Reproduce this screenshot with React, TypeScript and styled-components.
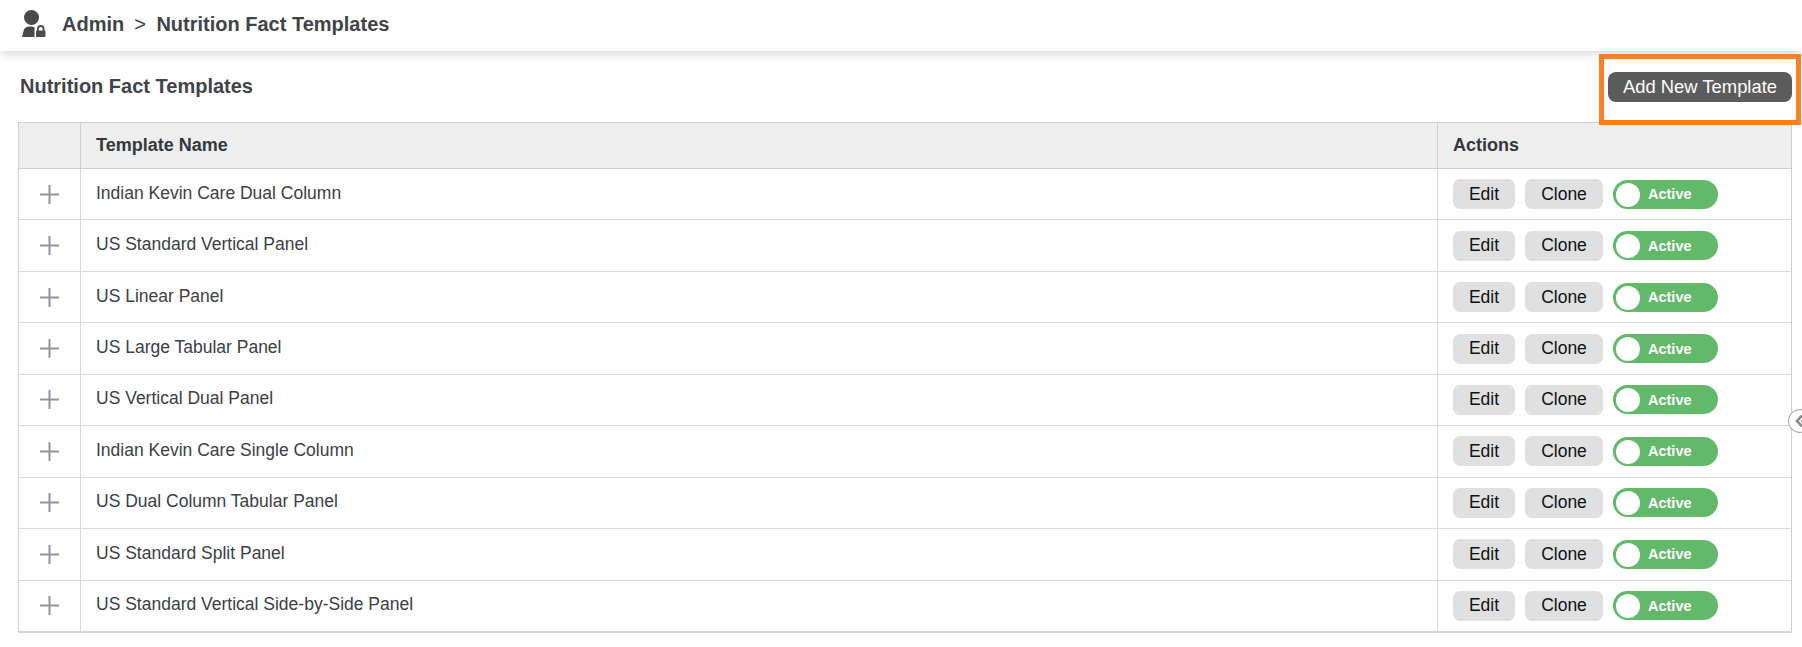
import React from "react";
import styled, { createGlobalStyle } from "styled-components";

const Global = createGlobalStyle`
  * { box-sizing: border-box; }
  html, body { margin: 0; padding: 0; background: #fff; overflow: hidden; }
  body { font-family: "Liberation Sans", Arial, sans-serif; color: #3b4045; }
`;

const Page = styled.div`
  position: relative;
  width: 1802px;
  height: 647px;
  overflow: hidden;
`;

const TopBar = styled.header`
  height: 51px;
  display: flex;
  align-items: center;
  padding: 0 0 3px 22px;
  background: #fff;
  box-shadow: 0 2px 10px rgba(0, 0, 0, 0.18);
  font-size: 20px;
  font-weight: 700;
  color: #3f4448;
`;

const UserIcon = styled.svg`
  width: 24px;
  height: 28px;
  margin-right: 16px;
  flex: none;
`;

const Separator = styled.span`
  font-weight: 400;
  margin: 0 10.5px 0 10px;
`;

const Content = styled.main`
  padding: 0 10px 0 18px;
`;

const TitleRow = styled.div`
  height: 71px;
  display: flex;
  align-items: center;
  justify-content: space-between;
`;

const Title = styled.h1`
  margin: 0 0 0 2px;
  font-size: 20px;
  font-weight: 700;
  color: #3f4448;
`;

const AddButton = styled.button`
  width: 184px;
  height: 30px;
  margin-top: 1px;
  border: 0;
  border-radius: 8px;
  background: #5c5c5c;
  color: #fff;
  font: 400 18.4px "Liberation Sans", Arial, sans-serif;
  padding: 0;
`;

const Callout = styled.div`
  position: absolute;
  left: 1599px;
  top: 54px;
  width: 202px;
  height: 71px;
  border: 5px solid #ff7f27;
  pointer-events: none;
`;

const Table = styled.div`
  border: 1px solid #cfcfcf;
  border-bottom-width: 2px;
  border-bottom-color: #d6d6d6;
`;

const HeaderRow = styled.div`
  display: grid;
  grid-template-columns: 61px 1fr 354px;
  height: 45px;
  background: #eeeeee;
  font-size: 18px;
  font-weight: 700;
  color: #33383c;
`;

const Row = styled.div`
  display: grid;
  grid-template-columns: 61px 1fr 354px;
  height: 51.45px;
  font-size: 17.5px;
  color: #3b4045;
  border-top: 1px solid #d9d9d9;
  ${HeaderRow} + & {
    border-top-color: #cfcfcf;
  }
`;

const Cell = styled.div<{ $divided?: boolean }>`
  display: flex;
  align-items: center;
  padding-left: 15px;
  border-left: ${(p) => (p.$divided ? "1px solid #d9d9d9" : "0")};
`;

const HeadCell = styled(Cell)`
  border-left-color: #cfcfcf;
`;

const NameText = styled.span`
  margin-top: -2px;
`;

const ExpandCell = styled.div`
  display: flex;
  align-items: center;
  justify-content: center;
`;

const PlusIcon = styled.svg`
  width: 21px;
  height: 21px;
`;

const Actions = styled.div`
  display: flex;
  align-items: center;
  gap: 10px;
`;

const GreyButton = styled.button<{ $w: number }>`
  width: ${(p) => p.$w}px;
  height: 30px;
  border: 0;
  border-radius: 7px;
  background: #e0e0e0;
  color: #111;
  font: 400 17.5px "Liberation Sans", Arial, sans-serif;
  padding: 0;
`;

const Toggle = styled.div`
  position: relative;
  width: 105px;
  height: 29px;
  border-radius: 15px;
  background: #62b969;
  color: #fff;
  font-size: 14.5px;
  font-weight: 700;
  display: flex;
  align-items: center;
  padding-left: 35px;
`;

const Knob = styled.span`
  position: absolute;
  left: 3px;
  top: 3px;
  width: 24px;
  height: 24px;
  border-radius: 50%;
  background: #fff;
`;

const SideHandle = styled.div`
  position: absolute;
  left: 1788px;
  top: 409px;
  width: 24px;
  height: 24px;
  border-radius: 50%;
  border: 1px solid #9a9a9a;
  background: #fff;
  display: flex;
  align-items: center;
  padding-left: 6px;
`;

const names = [
  "Indian Kevin Care Dual Column",
  "US Standard Vertical Panel",
  "US Linear Panel",
  "US Large Tabular Panel",
  "US Vertical Dual Panel",
  "Indian Kevin Care Single Column",
  "US Dual Column Tabular Panel",
  "US Standard Split Panel",
  "US Standard Vertical Side-by-Side Panel",
];

export default function App() {
  return (
    <Page>
      <Global />
      <TopBar>
        <UserIcon viewBox="0 0 24 28">
          <circle cx="9.5" cy="7.5" r="7.5" fill="#4a4a4a" />
          <path d="M0 27 L2 19.5 C3 17 6 16.5 9 16.5 C10.5 16.5 11.5 16.8 12.5 17.2 L12.5 27 Z" fill="#4a4a4a" />
          <path d="M16 21 V18.8 a2.8 2.8 0 0 1 5.6 0 V21" fill="none" stroke="#4a4a4a" strokeWidth="1.8" />
          <rect x="14" y="20.5" width="9.5" height="6.5" rx="1" fill="#4a4a4a" />
        </UserIcon>
        <span>Admin</span>
        <Separator>&gt;</Separator>
        <span>Nutrition Fact Templates</span>
      </TopBar>
      <Content>
        <TitleRow>
          <Title>Nutrition Fact Templates</Title>
          <AddButton>Add New Template</AddButton>
        </TitleRow>
        <Table>
          <HeaderRow>
            <div />
            <HeadCell $divided>Template Name</HeadCell>
            <HeadCell $divided>Actions</HeadCell>
          </HeaderRow>
          {names.map((name) => (
            <Row key={name}>
              <ExpandCell>
                <PlusIcon viewBox="0 0 21 21">
                  <path d="M10.5 1 V20 M1 10.5 H20" stroke="#8c95a0" strokeWidth="2" fill="none" />
                </PlusIcon>
              </ExpandCell>
              <Cell $divided>
                <NameText>{name}</NameText>
              </Cell>
              <Cell $divided>
                <Actions>
                  <GreyButton $w={62}>Edit</GreyButton>
                  <GreyButton $w={78}>Clone</GreyButton>
                  <Toggle>
                    <Knob />
                    Active
                  </Toggle>
                </Actions>
              </Cell>
            </Row>
          ))}
        </Table>
      </Content>
      <Callout />
      <SideHandle>
        <svg width="14" height="14" viewBox="0 0 14 14">
          <path d="M7 1.5 L2 7 L7 12.5 M12.5 1.5 L7.5 7 L12.5 12.5" stroke="#8a8a8a" strokeWidth="2.6" fill="none" />
        </svg>
      </SideHandle>
    </Page>
  );
}
